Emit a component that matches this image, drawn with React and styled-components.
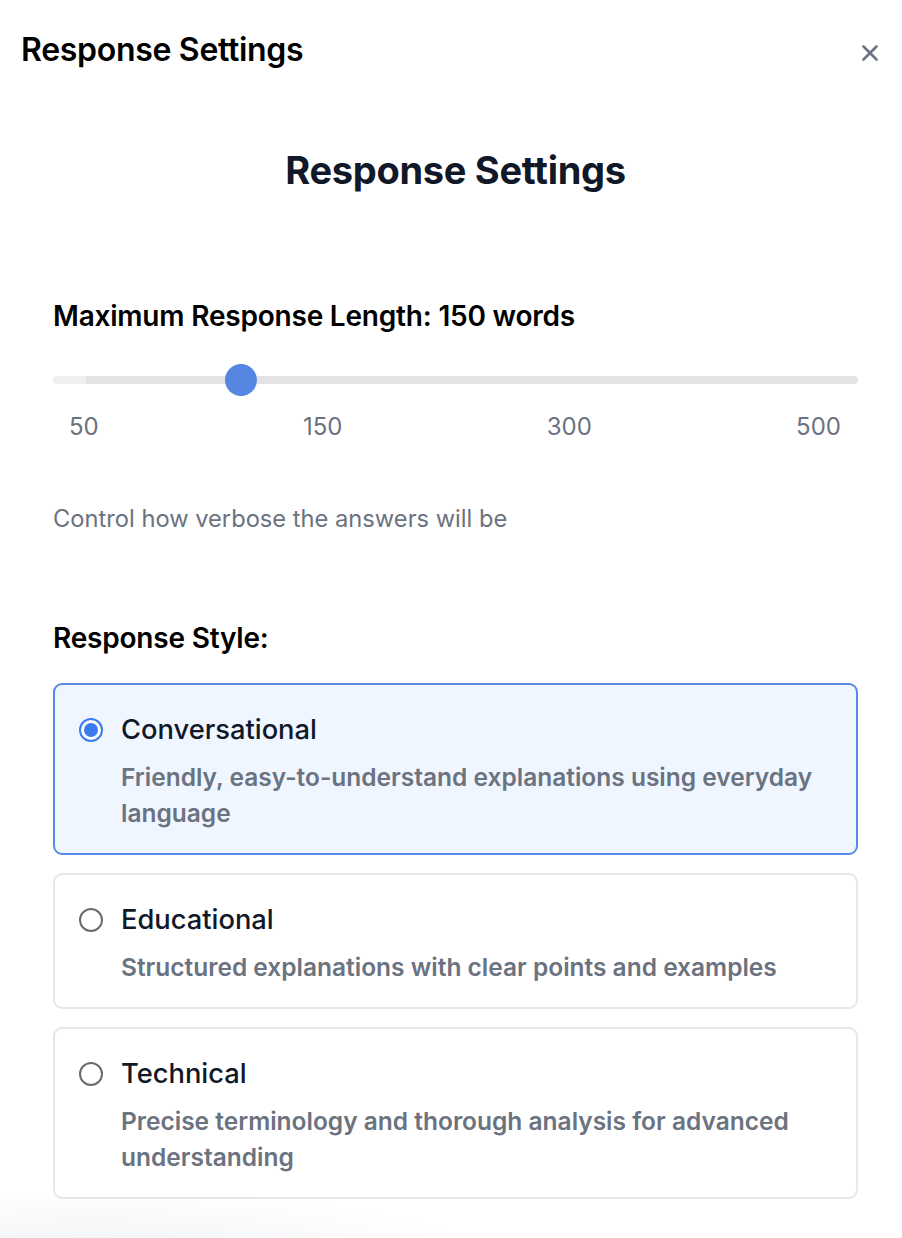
import React from 'react';
import styled, { createGlobalStyle } from 'styled-components';

const GlobalStyle = createGlobalStyle`
  body {
    margin: 0;
    background: #ffffff;
    font-family: Inter, "Noto Sans", sans-serif;
    -webkit-font-smoothing: antialiased;
  }
`;

const Page = styled.div`
  width: 902px;
  min-height: 1238px;
  position: relative;
  overflow: hidden;
  background: radial-gradient(ellipse 380px 60px at 90px 1252px, #f1f2f4 0%, rgba(255,255,255,0) 100%), #fff;
`;

const TopBar = styled.div`
  display: flex;
  align-items: center;
  justify-content: space-between;
  height: 100px;
  padding: 0 20px 0 21px;
  box-sizing: border-box;
`;

const TopTitle = styled.h2`
  margin: 0;
  font-size: 32px;
  line-height: 40px;
  font-weight: 600;
  color: #000;
  letter-spacing: -0.3px;
`;

const CloseButton = styled.button`
  border: none;
  background: none;
  padding: 0;
  margin-top: 6px;
  width: 24px;
  height: 24px;
  display: flex;
  align-items: center;
  justify-content: center;
  color: #6b7280;
  cursor: pointer;
`;

const Body = styled.div`
  padding: 0 44px 0 53px;
`;

const MainTitle = styled.h1`
  margin: 47px 0 0;
  text-align: center;
  font-size: 38px;
  line-height: 46px;
  font-weight: 700;
  color: #111827;
  letter-spacing: -0.3px;
`;

const Label = styled.div`
  font-size: 28px;
  line-height: 34px;
  font-weight: 600;
  color: #000;
  letter-spacing: -0.2px;
  margin-top: ${p => p.$top}px;
`;

const SliderTrack = styled.div`
  position: relative;
  height: 32px;
  margin-top: 31px;
  display: flex;
  align-items: center;
`;

const Rail = styled.div`
  width: 100%;
  height: 8px;
  border-radius: 4px;
  background: linear-gradient(to right, #f0f0f0 0, #f0f0f0 33px, #e3e3e5 33px);
`;

const Thumb = styled.div`
  position: absolute;
  top: 0;
  width: 32px;
  height: 32px;
  border-radius: 50%;
  background: #5686e1;
`;

const Ticks = styled.div`
  display: flex;
  justify-content: space-between;
  padding: 0 17px 0 16px;
  margin-top: 16px;
  font-size: 24px;
  line-height: 30px;
  color: #6b7280;
`;

const Help = styled.p`
  margin: 62px 0 0;
  font-size: 23.7px;
  line-height: 30px;
  color: #6b7280;
`;

const Options = styled.div`
  display: flex;
  flex-direction: column;
  gap: 18px;
  margin-top: 28px;
`;

const Card = styled.label`
  display: flex;
  gap: 18px;
  padding: 29px 24px 22px 24px;
  border-radius: 9px;
  border: 2px solid ${p => (p.$active ? '#5b8ae2' : '#e5e7eb')};
  background: ${p => (p.$active ? '#eff6ff' : '#fff')};
  cursor: pointer;
`;

const Radio = styled.span`
  flex: none;
  width: 24px;
  height: 24px;
  margin-top: 4px;
  border-radius: 50%;
  box-sizing: border-box;
  border: 2px solid ${p => (p.$active ? '#3b7bf0' : '#6b6b6b')};
  background: #fff;
  display: flex;
  align-items: center;
  justify-content: center;
  &::after {
    content: '';
    width: 14px;
    height: 14px;
    border-radius: 50%;
    background: ${p => (p.$active ? '#3b7bf0' : 'transparent')};
  }
`;

const OptionText = styled.div`
  display: flex;
  flex-direction: column;
`;

const OptionTitle = styled.div`
  font-size: 27.3px;
  font-weight: 500;
  color: #111827;
  line-height: 32px;
`;

const OptionDesc = styled.div`
  margin-top: 13px;
  font-size: 24.5px;
  font-weight: 600;
  line-height: 36px;
  color: #6b7280;
`;

const styles = [
  {
    id: 'conversational',
    title: 'Conversational',
    desc: 'Friendly, easy-to-understand explanations using everyday language',
  },
  {
    id: 'educational',
    title: 'Educational',
    desc: 'Structured explanations with clear points and examples',
  },
  {
    id: 'technical',
    title: 'Technical',
    desc: 'Precise terminology and thorough analysis for advanced understanding',
  },
];

export default function App() {
  const min = 50;
  const max = 500;
  const value = 150;
  const pct = (value - min) / (max - min);
  const selected = 'conversational';

  return (
    <Page>
      <GlobalStyle />
      <TopBar>
        <TopTitle>Response Settings</TopTitle>
        <CloseButton aria-label="Close">
          <svg width="18" height="18" viewBox="0 0 18 18" fill="none" stroke="currentColor" strokeWidth="2.6" strokeLinecap="round">
            <path d="M2.5 2.5l13 13M15.5 2.5l-13 13" />
          </svg>
        </CloseButton>
      </TopBar>
      <Body>
        <MainTitle>Response Settings</MainTitle>
        <Label $top={106}>Maximum Response Length: {value} words</Label>
        <SliderTrack>
          <Rail />
          <Thumb style={{ left: `calc(${pct} * (100% - 32px))` }} />
        </SliderTrack>
        <Ticks>
          <span>50</span>
          <span>150</span>
          <span>300</span>
          <span>500</span>
        </Ticks>
        <Help>Control how verbose the answers will be</Help>
        <Label $top={87}>Response Style:</Label>
        <Options>
          {styles.map(s => (
            <Card key={s.id} $active={s.id === selected}>
              <Radio $active={s.id === selected} />
              <OptionText>
                <OptionTitle>{s.title}</OptionTitle>
                <OptionDesc>{s.desc}</OptionDesc>
              </OptionText>
            </Card>
          ))}
        </Options>
      </Body>
    </Page>
  );
}
